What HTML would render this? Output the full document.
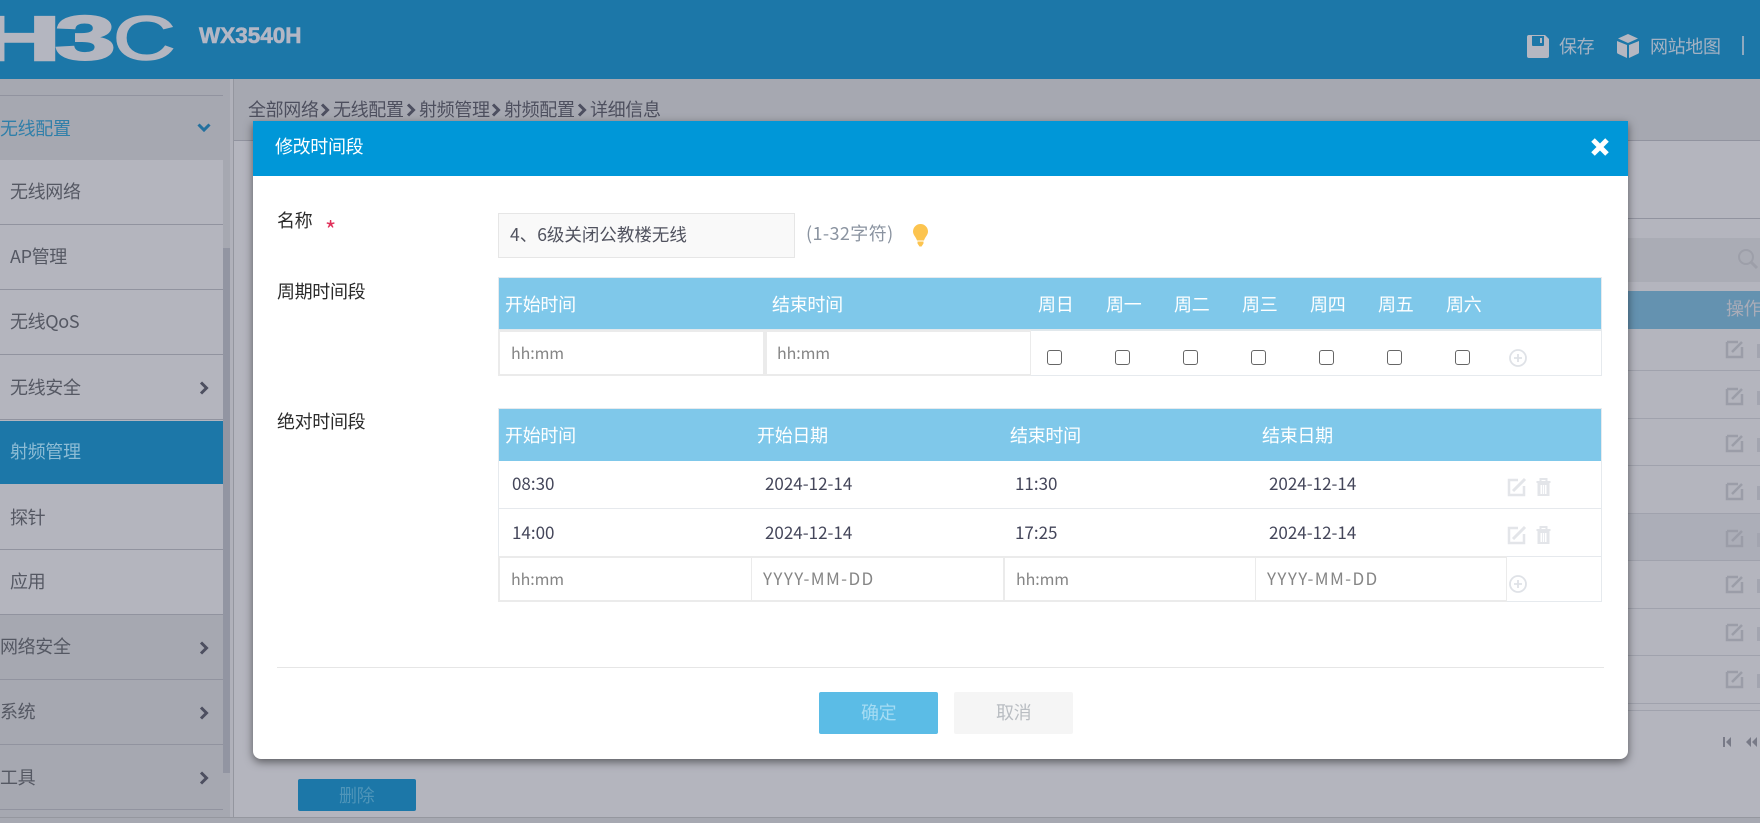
<!DOCTYPE html>
<html lang="zh-CN"><head><meta charset="utf-8"><title>修改时间段</title>
<style>
*{box-sizing:border-box}
html,body{margin:0;padding:0}
body{width:1760px;height:823px;position:relative;overflow:hidden;background:#b4b5be;font-family:"Noto Sans CJK SC","Liberation Sans",sans-serif;font-size:18px;color:#555863;letter-spacing:-.35px}
.a,.t,svg.i{position:absolute}
.t{white-space:nowrap;line-height:24px;height:24px}
.l{position:absolute;height:1px;background:#91939f}
.hd{color:#fff;font-size:18px;letter-spacing:-.3px}
.d{color:#44465a;font-size:17px;letter-spacing:0}
.p{color:#858585;font-size:16px;letter-spacing:-.1px}
.y{font-size:17px;letter-spacing:1.4px}
.inp{position:absolute;background:#fff;border:2px solid #ebebeb}
.cb{position:absolute;width:15px;height:15px;border:1.3px solid #666;border-radius:3px;background:#fff;top:350px}
</style></head><body>

<!-- page header -->
<div class="a" style="left:0;top:0;width:1760px;height:79px;background:#1c77a8"></div>
<svg class="i" style="left:0;top:0" width="190" height="79" font-family="Liberation Sans" font-weight="700" fill="#b4b6c0" stroke="#b4b6c0" font-size="62">
<text x="-22" y="60" textLength="82" lengthAdjust="spacingAndGlyphs" stroke-width="2.500">H</text>
<text x="55" y="59.500" textLength="60" lengthAdjust="spacingAndGlyphs" stroke-width="2">3</text>
<text x="113" y="59.500" textLength="62" lengthAdjust="spacingAndGlyphs" font-weight="400" stroke-width="1.500">C</text>
</svg>
<div class="t" style="left:199px;top:23px;font:700 22.500px/26px 'Liberation Sans',sans-serif;color:#b3b7c5;height:26px;letter-spacing:0;-webkit-text-stroke:.6px #b3b7c5">WX3540H</div>
<svg class="i" style="left:1527px;top:35px" width="22" height="23" viewBox="0 0 22 23"><path fill="#b5b7c1" d="M2 0H18L22 4V21A2 2 0 0 1 20 23H2A2 2 0 0 1 0 21V2A2 2 0 0 1 2 0ZM5 1V10A1 1 0 0 0 6 11H16A1 1 0 0 0 17 10V1ZM13 3H15V8H13Z" fill-rule="evenodd"/></svg>
<div class="t" style="left:1559px;top:34px;color:#a4b2c3">保存</div>
<svg class="i" style="left:1617px;top:34px" width="22" height="24" viewBox="0 0 22 24"><path fill="#b5b7c1" d="M11 0L21 4.500L11 9L1 4.500ZM0 7L10 11V24L1.500 20A2 2 0 0 1 0 18ZM22 7V18A2 2 0 0 1 20.500 20L12 24V11Z"/></svg>
<div class="t" style="left:1650px;top:34px;color:#a4b2c3">网站地图</div>
<div class="a" style="left:1742px;top:36px;width:2px;height:19px;background:#8fa9bf"></div>

<!-- sidebar -->
<div class="a" style="left:0;top:79px;width:223px;height:81px;background:#a6a8b1"></div>
<div class="a" style="left:0;top:160px;width:223px;height:454px;background:#b4b5be"></div>
<div class="a" style="left:0;top:614px;width:223px;height:203px;background:#a6a8b1"></div>
<div class="a" style="left:223px;top:79px;width:7px;height:738px;background:#a6a8b1"></div>
<div class="a" style="left:223px;top:248px;width:7px;height:525px;background:#9295a2"></div>
<div class="a" style="left:230px;top:79px;width:4px;height:738px;background:#b0b1ba"></div>
<div class="a" style="left:233px;top:79px;width:1px;height:738px;background:#94969f"></div>
<div class="l" style="left:0;top:95px;width:223px"></div>
<div class="l" style="left:0;top:224px;width:223px"></div>
<div class="l" style="left:0;top:289px;width:223px"></div>
<div class="l" style="left:0;top:354px;width:223px"></div>
<div class="l" style="left:0;top:419px;width:223px"></div>
<div class="a" style="left:0;top:421px;width:223px;height:63px;background:#1c77a8"></div>
<div class="l" style="left:0;top:549px;width:223px"></div>
<div class="l" style="left:0;top:614px;width:223px"></div>
<div class="l" style="left:0;top:679px;width:223px"></div>
<div class="l" style="left:0;top:744px;width:223px"></div>
<div class="l" style="left:0;top:809px;width:223px"></div>
<div class="t" style="left:0;top:116px;color:#2f7fa9">无线配置</div>
<svg class="i" style="left:196px;top:122px" width="16" height="12" viewBox="0 0 16 12"><path d="M2.500 2.500L8 8L13.500 2.500" fill="none" stroke="#23709e" stroke-width="3"/></svg>
<div class="t" style="left:10px;top:179px">无线网络</div>
<div class="t" style="left:10px;top:244px">AP管理</div>
<div class="t" style="left:10px;top:309px">无线QoS</div>
<div class="t" style="left:10px;top:375px">无线安全</div>
<div class="t" style="left:10px;top:439px;color:#8dbcd5">射频管理</div>
<div class="t" style="left:10px;top:505px">探针</div>
<div class="t" style="left:10px;top:569px">应用</div>
<div class="t" style="left:0;top:634px">网络安全</div>
<div class="t" style="left:0;top:699px">系统</div>
<div class="t" style="left:0;top:765px">工具</div>
<svg class="i" style="left:198px;top:380px" width="12" height="16" viewBox="0 0 12 16"><path d="M3 2.500L8.500 8L3 13.500" fill="none" stroke="#4d4f60" stroke-width="3"/></svg>
<svg class="i" style="left:198px;top:640px" width="12" height="16" viewBox="0 0 12 16"><path d="M3 2.500L8.500 8L3 13.500" fill="none" stroke="#4d4f60" stroke-width="3"/></svg>
<svg class="i" style="left:198px;top:705px" width="12" height="16" viewBox="0 0 12 16"><path d="M3 2.500L8.500 8L3 13.500" fill="none" stroke="#4d4f60" stroke-width="3"/></svg>
<svg class="i" style="left:198px;top:770px" width="12" height="16" viewBox="0 0 12 16"><path d="M3 2.500L8.500 8L3 13.500" fill="none" stroke="#4d4f60" stroke-width="3"/></svg>

<!-- main area behind the dialog -->
<div class="a" style="left:234px;top:79px;width:1526px;height:61px;background:#a6a8b1"></div>
<div class="l" style="left:234px;top:140px;width:1526px"></div>
<div class="t" style="left:248px;top:97px;color:#4d4f5e">全部网络</div>
<div class="t" style="left:333px;top:97px;color:#4d4f5e">无线配置</div>
<div class="t" style="left:419px;top:97px;color:#4d4f5e">射频管理</div>
<div class="t" style="left:504px;top:97px;color:#4d4f5e">射频配置</div>
<div class="t" style="left:590px;top:97px;color:#4d4f5e">详细信息</div>
<svg class="i" style="left:319px;top:102px" width="14" height="16" viewBox="0 0 14 16"><path d="M3 2.500L8.500 8L3 13.500" fill="none" stroke="#4d4f60" stroke-width="3"/></svg>
<svg class="i" style="left:405px;top:102px" width="14" height="16" viewBox="0 0 14 16"><path d="M3 2.500L8.500 8L3 13.500" fill="none" stroke="#4d4f60" stroke-width="3"/></svg>
<svg class="i" style="left:490px;top:102px" width="14" height="16" viewBox="0 0 14 16"><path d="M3 2.500L8.500 8L3 13.500" fill="none" stroke="#4d4f60" stroke-width="3"/></svg>
<svg class="i" style="left:576px;top:102px" width="14" height="16" viewBox="0 0 14 16"><path d="M3 2.500L8.500 8L3 13.500" fill="none" stroke="#4d4f60" stroke-width="3"/></svg>
<div class="l" style="left:1628px;top:218px;width:132px"></div>
<div class="a" style="left:1628px;top:238px;width:132px;height:44px;background:#aaacb5"></div>
<svg class="i" style="left:1734px;top:246px" width="26" height="26" viewBox="0 0 26 26"><circle cx="12" cy="11" r="7" fill="none" stroke="#9d9fa9" stroke-width="2"/><path d="M17 16L23 22" stroke="#9d9fa9" stroke-width="3"/></svg>
<div class="a" style="left:1628px;top:291px;width:132px;height:38px;background:#6492b0"></div>
<div class="t" style="left:1726px;top:296px;color:#a9acb8">操作</div>
<div class="a" style="left:1628px;top:513px;width:132px;height:47px;background:#acaeb8"></div>
<div class="l" style="left:1628px;top:370px;width:132px;background:#a0a2ad"></div>
<div class="l" style="left:1628px;top:418px;width:132px;background:#a0a2ad"></div>
<div class="l" style="left:1628px;top:465px;width:132px;background:#a0a2ad"></div>
<div class="l" style="left:1628px;top:513px;width:132px;background:#a0a2ad"></div>
<div class="l" style="left:1628px;top:560px;width:132px;background:#a0a2ad"></div>
<div class="l" style="left:1628px;top:608px;width:132px;background:#a0a2ad"></div>
<div class="l" style="left:1628px;top:655px;width:132px;background:#a0a2ad"></div>
<div class="l" style="left:1628px;top:703px;width:132px;background:#a0a2ad"></div>
<div class="l" style="left:1628px;top:710px;width:132px;background:#a0a2ad"></div>
<svg class="i" style="left:1725px;top:339px" width="35" height="360" viewBox="0 0 35 360" fill="none" stroke="#9b9da8" stroke-width="2.500">
<g id="rw"><path d="M2 3H13M2 3V18H17V8M7 13L17 3"/><rect x="32" y="5" width="3" height="14" fill="#a3a5b0" stroke="none"/></g>
<use href="#rw" y="47"/><use href="#rw" y="94"/><use href="#rw" y="142"/><use href="#rw" y="189"/><use href="#rw" y="235"/><use href="#rw" y="283"/><use href="#rw" y="330"/>
</svg>
<svg class="i" style="left:1722px;top:736px" width="38" height="12" viewBox="0 0 38 12" fill="#787a87"><path d="M1 1H3V11H1ZM9 1V11L4 6ZM29 1V11L24 6ZM35 1V11L30 6Z"/></svg>
<div class="a" style="left:298px;top:779px;width:118px;height:32px;background:#1c77a8;border-radius:2px"></div>
<div class="t" style="left:339px;top:783px;color:#4f95b9">删除</div>
<div class="a" style="left:0;top:817px;width:1760px;height:6px;background:#a6a8b1;border-top:1px solid #95979f"></div>

<!-- dialog -->
<div class="a" style="left:253px;top:121px;width:1375px;height:638px;background:#fff;border-radius:0 0 8px 8px;box-shadow:0 3px 9px rgba(0,0,0,.5)"></div>
<div class="a" style="left:253px;top:121px;width:1375px;height:55px;background:#0097d8"></div>
<div class="t" style="left:275px;top:134px;color:#fff">修改时间段</div>
<svg class="i" style="left:1590px;top:137px" width="20" height="20" viewBox="0 0 20 20"><path d="M3 3L17 17M17 3L3 17" stroke="#fff" stroke-width="5"/></svg>

<div class="t" style="left:277px;top:208px;color:#2b2b2b">名称</div>
<div class="t" style="left:325px;top:217px;color:#e0315a;font-size:24px">*</div>
<div class="t" style="left:277px;top:279px;color:#2b2b2b">周期时间段</div>
<div class="t" style="left:277px;top:409px;color:#2b2b2b">绝对时间段</div>

<div class="a" style="left:498px;top:213px;width:297px;height:45px;background:#f9f9f9;border:1px solid #e6e6e6"></div>
<div class="t" style="left:510px;top:223px;font-size:17.500px;letter-spacing:0;color:#50525e">4、6级关闭公教楼无线</div>
<div class="t" style="left:806px;top:221px;font-size:18px;letter-spacing:.4px;color:#8a93a0">(1-32字符)</div>
<svg class="i" style="left:913px;top:224px" width="15" height="23" viewBox="0 0 15 23"><path fill="#fcc44f" d="M7.500 0A7.500 7.500 0 0 1 15 7.500C15 11 12 13 11 16.500H4C3 13 0 11 0 7.500A7.500 7.500 0 0 1 7.500 0ZM4.500 17.500H10.500V19.500L8.500 22.500H6.500L4.500 19.500Z"/></svg>

<!-- table 1 -->
<div class="a" style="left:498px;top:277px;width:1104px;height:99px;border:1px solid #e6eaee;background:#fff"></div>
<div class="a" style="left:499px;top:278px;width:1102px;height:51px;background:#7fc8ea"></div>
<div class="a" style="left:499px;top:329px;width:1102px;height:2px;background:#e1e8ec"></div>
<div class="t hd" style="left:505px;top:292px">开始时间</div>
<div class="t hd" style="left:772px;top:292px">结束时间</div>
<div class="t hd" style="left:1038px;top:292px">周日</div>
<div class="t hd" style="left:1106px;top:292px">周一</div>
<div class="t hd" style="left:1174px;top:292px">周二</div>
<div class="t hd" style="left:1242px;top:292px">周三</div>
<div class="t hd" style="left:1310px;top:292px">周四</div>
<div class="t hd" style="left:1378px;top:292px">周五</div>
<div class="t hd" style="left:1446px;top:292px">周六</div>
<div class="inp" style="left:498px;top:330px;width:267px;height:46px"></div>
<div class="inp" style="left:765px;top:330px;width:266px;height:46px;border-right-width:1px"></div>
<div class="t p" style="left:511px;top:340px">hh:mm</div>
<div class="t p" style="left:777px;top:340px">hh:mm</div>
<div class="cb" style="left:1047px"></div><div class="cb" style="left:1115px"></div><div class="cb" style="left:1183px"></div><div class="cb" style="left:1251px"></div><div class="cb" style="left:1319px"></div><div class="cb" style="left:1387px"></div><div class="cb" style="left:1455px"></div>
<svg class="i" style="left:1509px;top:349px" width="18" height="18" viewBox="0 0 18 18" fill="none" stroke="#dfe2e7" stroke-width="1.800"><circle cx="9" cy="9" r="8"/><path d="M9 5V13M5 9H13"/></svg>

<!-- table 2 -->
<div class="a" style="left:498px;top:408px;width:1104px;height:194px;border:1px solid #e6eaee;background:#fff"></div>
<div class="a" style="left:499px;top:409px;width:1102px;height:52px;background:#7fc8ea"></div>
<div class="l" style="left:499px;top:508px;width:1102px;background:#e6e9ed"></div>
<div class="t hd" style="left:505px;top:423px">开始时间</div>
<div class="t hd" style="left:757px;top:423px">开始日期</div>
<div class="t hd" style="left:1010px;top:423px">结束时间</div>
<div class="t hd" style="left:1262px;top:423px">结束日期</div>
<div class="t d" style="left:512px;top:471px">08:30</div>
<div class="t d" style="left:765px;top:471px">2024-12-14</div>
<div class="t d" style="left:1015px;top:471px">11:30</div>
<div class="t d" style="left:1269px;top:471px">2024-12-14</div>
<div class="t d" style="left:512px;top:520px">14:00</div>
<div class="t d" style="left:765px;top:520px">2024-12-14</div>
<div class="t d" style="left:1015px;top:520px">17:25</div>
<div class="t d" style="left:1269px;top:520px">2024-12-14</div>
<div class="l" style="left:499px;top:556px;width:1102px;height:1px;background:#e6e9ed"></div>
<div class="inp" style="left:498px;top:556px;width:254px;height:46px;border-right-width:1px"></div>
<div class="inp" style="left:751px;top:556px;width:253px;height:46px;border-width:2px 1px"></div>
<div class="inp" style="left:1004px;top:556px;width:252px;height:46px;border-width:2px 1px"></div>
<div class="inp" style="left:1255px;top:556px;width:252px;height:46px;border-width:2px 1px"></div>
<div class="t p" style="left:511px;top:566px">hh:mm</div>
<div class="t p y" style="left:763px;top:566px">YYYY-MM-DD</div>
<div class="t p" style="left:1016px;top:566px">hh:mm</div>
<div class="t p y" style="left:1267px;top:566px">YYYY-MM-DD</div>
<svg class="i" style="left:1509px;top:575px" width="18" height="18" viewBox="0 0 18 18" fill="none" stroke="#dfe2e7" stroke-width="1.800"><circle cx="9" cy="9" r="8"/><path d="M9 5V13M5 9H13"/></svg>

<svg class="i" style="left:1507px;top:477px" width="46" height="20" viewBox="0 0 46 20" fill="none" stroke="#e3e5e9">
<g stroke-width="2.500"><path d="M11 3H2V18H17V9"/><path d="M6 14L18 2" stroke-width="3"/></g>
<g transform="translate(-1.500 0)"><path d="M31 5H45M35 4V2H41V4" stroke-width="2"/><path fill="#e3e5e9" stroke="none" d="M32 6H44V19H32ZM35 8V17H36.500V8ZM37.300 8V17H38.700V8ZM39.500 8V17H41V8Z" fill-rule="evenodd"/></g>
</svg>
<svg class="i" style="left:1507px;top:525px" width="46" height="20" viewBox="0 0 46 20" fill="none" stroke="#e3e5e9">
<g stroke-width="2.500"><path d="M11 3H2V18H17V9"/><path d="M6 14L18 2" stroke-width="3"/></g>
<g transform="translate(-1.500 0)"><path d="M31 5H45M35 4V2H41V4" stroke-width="2"/><path fill="#e3e5e9" stroke="none" d="M32 6H44V19H32ZM35 8V17H36.500V8ZM37.300 8V17H38.700V8ZM39.500 8V17H41V8Z" fill-rule="evenodd"/></g>
</svg>

<!-- footer -->
<div class="a" style="left:277px;top:667px;width:1327px;height:1px;background:#e6e6e6"></div>
<div class="a" style="left:819px;top:692px;width:119px;height:42px;background:#5bbce6;border-radius:2px"></div>
<div class="a" style="left:954px;top:692px;width:119px;height:42px;background:#f5f5f5;border-radius:2px"></div>
<div class="t" style="left:861px;top:700px;color:#a5dcf3">确定</div>
<div class="t" style="left:996px;top:700px;color:#b9bdc2">取消</div>
</body></html>
